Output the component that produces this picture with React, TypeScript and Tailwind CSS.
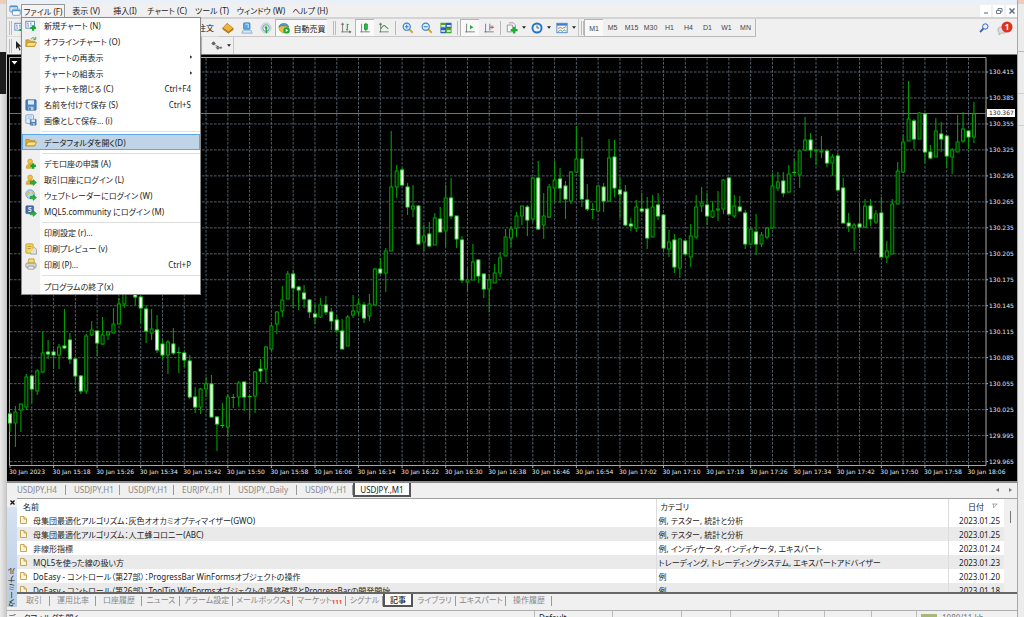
import { useState, type ReactNode } from "react";

// [high, body top, body bottom, low, bearish] in chart units, one entry per minute
const candles: [number, number, number, number, number][] = [
  [412, 414, 423, 432, 1], [406, 412, 423, 447, 0], [404, 404, 410, 432, 0], [374, 377, 407, 410, 0],
  [375, 376, 389, 403, 1], [369, 371, 391, 395, 0], [332, 353, 372, 373, 0], [340, 352, 354, 359, 1],
  [349, 352, 355, 369, 1], [344, 347, 355, 369, 0], [309, 346, 348, 349, 1], [333, 340, 359, 364, 1],
  [359, 359, 376, 385, 1], [375, 376, 391, 394, 1], [334, 336, 391, 394, 0], [321, 330, 335, 336, 0],
  [331, 331, 343, 356, 1], [317, 335, 344, 345, 0], [331, 332, 335, 340, 0], [308, 324, 333, 333, 0],
  [298, 304, 324, 324, 0], [280, 285, 304, 308, 0], [275, 282, 292, 293, 0], [280, 285, 297, 305, 1],
  [293, 297, 308, 323, 1], [305, 309, 331, 343, 1], [309, 329, 333, 340, 0], [315, 330, 350, 353, 1],
  [340, 344, 355, 360, 1], [340, 342, 355, 374, 0], [328, 344, 353, 355, 1], [347, 352, 352, 373, 0],
  [352, 353, 360, 367, 1], [355, 361, 397, 399, 1], [387, 397, 407, 413, 1], [388, 389, 407, 414, 0],
  [377, 384, 389, 397, 0], [375, 384, 417, 417, 1], [416, 417, 424, 451, 1], [403, 425, 425, 428, 0],
  [394, 397, 427, 437, 0], [394, 397, 397, 408, 0], [381, 383, 397, 407, 0], [382, 382, 397, 411, 1],
  [396, 396, 396, 418, 0], [371, 372, 396, 413, 0], [359, 369, 371, 382, 1], [346, 347, 369, 383, 0],
  [323, 326, 349, 351, 0], [311, 312, 324, 334, 0], [286, 300, 311, 317, 0], [271, 274, 299, 299, 0],
  [270, 274, 288, 308, 1], [286, 287, 290, 310, 1], [285, 293, 299, 308, 1], [299, 300, 312, 318, 1],
  [304, 314, 317, 324, 1], [298, 305, 317, 318, 0], [296, 305, 312, 315, 1], [308, 312, 321, 330, 1],
  [315, 320, 330, 333, 1], [319, 331, 349, 349, 1], [315, 317, 346, 346, 0], [295, 311, 315, 318, 0],
  [298, 304, 312, 315, 0], [302, 305, 318, 323, 1], [294, 304, 316, 321, 0], [268, 269, 305, 305, 0],
  [258, 269, 273, 274, 1], [248, 251, 273, 292, 0], [131, 187, 251, 251, 0], [165, 171, 187, 198, 0],
  [168, 170, 185, 186, 1], [183, 187, 207, 215, 1], [185, 206, 209, 217, 0], [205, 206, 244, 245, 1],
  [225, 236, 242, 251, 0], [222, 234, 246, 247, 1], [213, 218, 245, 245, 0], [207, 219, 232, 232, 1],
  [185, 198, 231, 247, 0], [178, 198, 216, 219, 1], [216, 216, 239, 248, 1], [236, 240, 280, 283, 1],
  [267, 280, 282, 292, 0], [244, 262, 280, 280, 0], [259, 260, 276, 283, 1], [274, 274, 289, 298, 1],
  [274, 280, 289, 312, 0], [264, 273, 283, 283, 0], [252, 258, 273, 277, 0], [229, 237, 256, 256, 0],
  [226, 229, 238, 247, 0], [212, 216, 228, 237, 0], [206, 206, 216, 225, 0], [205, 207, 220, 236, 1],
  [177, 178, 219, 222, 0], [161, 178, 229, 230, 1], [193, 216, 225, 239, 0], [184, 187, 217, 218, 0],
  [161, 180, 188, 202, 0], [168, 179, 188, 203, 1], [181, 186, 199, 219, 1], [171, 172, 201, 204, 0],
  [126, 159, 172, 173, 0], [137, 159, 199, 207, 1], [184, 200, 209, 211, 1], [203, 209, 209, 219, 0],
  [185, 186, 211, 211, 0], [183, 187, 201, 212, 1], [139, 158, 201, 202, 0], [140, 157, 188, 197, 1],
  [177, 190, 194, 218, 1], [185, 192, 225, 226, 1], [218, 224, 226, 231, 1], [200, 207, 228, 232, 0],
  [193, 209, 211, 213, 1], [197, 209, 238, 249, 1], [195, 207, 237, 237, 0], [193, 205, 216, 220, 1],
  [214, 215, 248, 251, 1], [230, 242, 249, 257, 0], [234, 240, 267, 273, 1], [238, 239, 268, 278, 0],
  [240, 241, 254, 255, 1], [224, 236, 257, 267, 0], [195, 207, 237, 239, 0], [187, 203, 206, 212, 0],
  [193, 205, 216, 225, 1], [201, 211, 217, 218, 0], [191, 209, 210, 221, 0], [179, 180, 209, 214, 0],
  [177, 178, 214, 214, 1], [195, 206, 216, 218, 0], [196, 207, 211, 212, 1], [210, 213, 244, 249, 1],
  [229, 229, 244, 245, 0], [214, 232, 244, 255, 1], [232, 235, 244, 247, 0], [227, 228, 237, 239, 0],
  [173, 186, 228, 229, 0], [172, 182, 188, 191, 0], [172, 181, 193, 197, 1], [165, 174, 192, 193, 0],
  [159, 172, 172, 176, 0], [151, 151, 175, 188, 0], [117, 140, 150, 151, 0], [133, 140, 150, 158, 1],
  [149, 150, 151, 165, 0], [136, 151, 152, 158, 0], [149, 151, 163, 167, 1], [154, 157, 163, 176, 0],
  [153, 156, 190, 190, 1], [178, 188, 223, 223, 1], [213, 223, 226, 232, 1], [223, 225, 228, 251, 0],
  [204, 224, 227, 233, 1], [199, 206, 227, 228, 0], [199, 206, 219, 226, 1], [210, 214, 222, 224, 0],
  [197, 213, 257, 257, 1], [241, 251, 257, 263, 0], [199, 204, 254, 254, 0], [162, 171, 204, 204, 0],
  [135, 142, 172, 173, 0], [81, 119, 141, 141, 0], [119, 121, 139, 149, 1], [112, 113, 139, 139, 0],
  [114, 114, 152, 163, 1], [145, 152, 158, 159, 1], [118, 131, 157, 157, 0], [122, 134, 139, 152, 1],
  [136, 136, 156, 168, 1], [148, 150, 157, 174, 0], [115, 142, 152, 152, 0], [112, 129, 141, 143, 0],
  [130, 131, 137, 149, 1], [102, 114, 137, 143, 0],
];

const STEP = 5.446;
const xAt = (i: number) => 10 + i * STEP;
const yAt = (row: number) => 72 + row * 25.97;

function timeLabel(n: number) {
  if (n === 0) return "30 Jan 2023";
  const minutes = 15 * 60 + 10 + n * 8;
  return `30 Jan ${Math.floor(minutes / 60)}:${String(minutes % 60).padStart(2, "0")}`;
}

function Chart() {
  return (
    <svg viewBox="7 55 1010 425" preserveAspectRatio="xMinYMin meet" className="h-full w-full" role="img" aria-label="USDJPY M1">
      <g stroke="#5c6a76" strokeWidth="0.9" strokeDasharray="2.6 1.4">
        {Array.from({ length: 16 }, (_, r) => (
          <line key={r} x1="10" x2="986" y1={yAt(r)} y2={yAt(r)} />
        ))}
        {Array.from({ length: 44 }, (_, c) => (
          <line key={c} x1={xAt(c * 4 + 4)} x2={xAt(c * 4 + 4)} y1="58" y2="465" />
        ))}
      </g>
      <line x1="10" x2="986" y1="113.5" y2="113.5" stroke="#66757f" />
      <path d="M9.5 465.5V57.5H986M986 57.5V465.5H9.5" fill="none" stroke="#a8a8a8" />
      {candles.map(([high, top, bottom, low, bear], i) => {
        const x = xAt(i);
        return (
          <g key={i} stroke="#00a000">
            <line x1={x} x2={x} y1={high} y2={low} strokeWidth="1.1" />
            {bottom - top < 1 ? (
              <line x1={x - 2} x2={x + 2} y1={top + 0.5} y2={top + 0.5} stroke="#00d000" />
            ) : (
              <rect
                x={x - 1.5}
                y={top}
                width="3"
                height={bottom - top}
                fill={bear ? "#ffffff" : "#001c00"}
                stroke={bear ? "#3be03b" : "#00a000"}
              />
            )}
          </g>
        );
      })}
      <path d="M11.500 61h6l-3 3.500z" fill="#fff" />
      <g fill="#e8e8e8" fontSize="6" fontFamily="'DejaVu Sans', sans-serif">
        {Array.from({ length: 16 }, (_, r) => (
          <g key={r}>
            <line x1="986" x2="988" y1={yAt(r)} y2={yAt(r)} stroke="#a8a8a8" />
            <text x="989" y={yAt(r) + 2}>{(130.415 - r * 0.03).toFixed(3)}</text>
          </g>
        ))}
        {Array.from({ length: 23 }, (_, n) => (
          <g key={n}>
            <line x1={xAt(n * 8)} x2={xAt(n * 8)} y1="465" y2="468" stroke="#a8a8a8" />
            <text x={xAt(n * 8) - 1} y="474">{timeLabel(n)}</text>
          </g>
        ))}
        <rect x="987" y="109" width="28" height="8" fill="#fff" />
        <text x="989" y="115" fill="#222">130.367</text>
      </g>
    </svg>
  );
}

function Icon({ children, className = "size-3.5" }: { children: ReactNode; className?: string }) {
  return (
    <svg viewBox="0 0 14 14" className={`${className} shrink-0`} fill="none" aria-hidden="true">
      {children}
    </svg>
  );
}

const greenPlus = <path d="M9.500 6v6.500M6.300 9.300h6.500" stroke="#12a82a" strokeWidth="2.600" />;
const greenArrow = <path d="M6 8.500h3.500V6.500L13.500 10l-4 3.500v-2H6z" fill="#22b338" stroke="#0d7d20" strokeWidth=".5" />;
const person = (
  <>
    <path d="M1.500 12c0-4 2-5 4.500-5s4.500 1 4.500 5z" fill="#eab42a" stroke="#b9811a" strokeWidth=".6" />
    <circle cx="6" cy="4" r="2.800" fill="#f3c13d" stroke="#b9811a" strokeWidth=".6" />
  </>
);
const floppy = (
  <>
    <rect x="1" y="1" width="12" height="12" rx="1" fill="#4c82bd" stroke="#2f5f97" strokeWidth=".8" />
    <rect x="3.500" y="1.500" width="7" height="5" fill="#dcebfa" />
    <rect x="4" y="9" width="6" height="4" fill="#b8cde0" />
    <rect x="5" y="10" width="1.500" height="3" fill="#2f5f97" />
  </>
);

const icons: Record<string, ReactNode> = {
  newChart: (
    <>
      <rect x="1" y="1.500" width="10" height="8" fill="#f5faff" stroke="#4b83bd" />
      <path d="M3.500 3v5M2.500 4h1M3.500 7h1M7 3v4M6 4h1" stroke="#4b83bd" strokeWidth=".8" />
      {greenPlus}
    </>
  ),
  folder: (
    <>
      <path d="M1 11.500V4h4l1 1.500h5.500v6z" fill="#e3ad2c" stroke="#a87814" strokeWidth=".7" />
      <path d="M1 11.500 3.500 7h10L11 11.500z" fill="#ffe27a" stroke="#a87814" strokeWidth=".7" />
    </>
  ),
  folderArrow: (
    <>
      <path d="M1 12V4.500h4L6 6h5.500v6z" fill="#e3ad2c" stroke="#a87814" strokeWidth=".7" />
      <path d="M1 12 3.500 7.500h10L11 12z" fill="#ffe27a" stroke="#a87814" strokeWidth=".7" />
      <path d="M7 4c1-2.500 3.500-2.500 4.500-1M12.500 1v3H9.800" stroke="#2a9c36" />
    </>
  ),
  save: floppy,
  saveImage: (
    <>
      <rect x="1" y="1" width="9" height="10" rx="1" fill="#e6f1fb" stroke="#6c9bcb" />
      <path d="M3 3.500h5M3 5.500h3" stroke="#8fb3d8" />
      <g transform="translate(5.500 5.500) scale(.58)">{floppy}</g>
    </>
  ),
  demo: <>{person}{greenPlus}</>,
  login: <>{person}{greenArrow}</>,
  web: (
    <>
      <circle cx="6" cy="6" r="5" fill="#b6dcf5" stroke="#4b83bd" strokeWidth=".8" />
      <path d="M3 3c2-1 3 0 3 1.500S4 6 3.500 8 2 7 1.500 6M7 2c1.500 0 3 1 3.500 3L8 6z" fill="#d9c44c" />
      {greenArrow}
    </>
  ),
  mql: (
    <>
      <rect x="1" y="1" width="9" height="9" rx="1" fill="#506fa8" stroke="#324e85" strokeWidth=".7" />
      <path d="M7.500 3H4.500v2h2.500v2.500H4" stroke="#fff" />
      {greenArrow}
    </>
  ),
  preview: (
    <>
      <rect x="1" y="1" width="8.500" height="11" rx="1" fill="#f4d75a" stroke="#a88d2a" strokeWidth=".8" />
      <path d="M3 4h4.500M3 6.500h3.500" stroke="#a88d2a" />
      <path d="M10 5.500h1.500l2 2V13H6.500v-2" fill="#e2e2dc" stroke="#8d8d85" strokeWidth=".8" />
    </>
  ),
  print: (
    <>
      <path d="M3.500 6 4.500 1h6l.5 5z" fill="#f6dc66" stroke="#a88d2a" strokeWidth=".8" />
      <rect x="1" y="6" width="12" height="5.500" rx="1.500" fill="#d5d5d0" stroke="#85857e" strokeWidth=".8" />
      <path d="M3.500 9.500h7V13h-7z" fill="#efefea" stroke="#85857e" strokeWidth=".8" />
    </>
  ),
  book: (
    <>
      <path d="m1 7 5-5.500 7 6-5.500 5z" fill="#eeb43c" stroke="#a56f12" strokeWidth=".8" />
      <path d="m1 7 6.500 4.500L13 7.500v1.500l-5.500 4L1 8.500z" fill="#c98a1c" stroke="#a56f12" strokeWidth=".7" />
    </>
  ),
  terminal: (
    <>
      <rect x="3" y="1" width="7.500" height="7.500" rx="1" fill="#58a8e8" stroke="#2c70b5" strokeWidth=".8" />
      <path d="M5 2.500h3.500V7" stroke="#d5ecff" />
      <path d="m2.500 9.500-1.500 3.500h12l-1.500-3.500z" fill="#dce8f5" stroke="#7396bf" strokeWidth=".8" />
    </>
  ),
  signal: (
    <>
      <circle cx="7" cy="7" r="5.800" stroke="#b5c0c8" />
      <circle cx="7" cy="7" r="3.700" stroke="#6fa4c4" strokeWidth="1.200" />
      <circle cx="7" cy="6.500" r="1.500" fill="#22a838" />
      <path d="M7.500 7v6" stroke="#22a838" strokeWidth="1.800" />
    </>
  ),
  auto: (
    <>
      <path d="M1 5.500 4 2.500h5l3.500 3-1.500 5-5 2.500-4-3z" fill="#f0bf35" stroke="#a8821c" strokeWidth=".6" />
      <path d="M1 5.500C2 1 11 0 12.500 5.500 9 4 5 4 1 5.500z" fill="#4f9bd6" stroke="#2a6ea8" strokeWidth=".6" />
      <circle cx="10" cy="9.800" r="3.700" fill="#19a832" />
      <path d="m9 7.800 3 2-3 2z" fill="#fff" />
    </>
  ),
  bars: (
    <>
      <path d="M3 2v10M1.500 11.500h11M3 1 1.800 3h2.400zM13 11.500l-2-1.200v2.400z" stroke="#666" strokeWidth=".9" />
      <path d="M8.500 2v8M7 9h1.500M8.500 3H10" stroke="#23963a" strokeWidth="1.200" />
    </>
  ),
  candle: (
    <>
      <path d="M3 2v10M1.500 11.500h11" stroke="#666" strokeWidth=".9" />
      <path d="M8 1v10" stroke="#168a2e" />
      <rect x="6.300" y="2.500" width="3.400" height="6" fill="#22c043" stroke="#168a2e" strokeWidth=".8" />
    </>
  ),
  line: (
    <>
      <path d="M3 2v10M1.500 11.500h11M3 1 1.800 3h2.400z" stroke="#666" strokeWidth=".9" />
      <path d="M3.500 8C5 4 7.500 3 9 5.500l3 2.500" stroke="#3a9c4c" strokeWidth="1.200" />
    </>
  ),
  zoomIn: (
    <>
      <path d="m8.500 8.500 4 4" stroke="#d7a62a" strokeWidth="2.200" />
      <circle cx="5.500" cy="5.500" r="4.200" fill="#d9ecfb" stroke="#3b7fc4" strokeWidth="1.300" />
      <path d="M3.300 5.500h4.400M5.500 3.300v4.400" stroke="#3b7fc4" strokeWidth="1.200" />
    </>
  ),
  zoomOut: (
    <>
      <path d="m8.500 8.500 4 4" stroke="#d7a62a" strokeWidth="2.200" />
      <circle cx="5.500" cy="5.500" r="4.200" fill="#d9ecfb" stroke="#3b7fc4" strokeWidth="1.300" />
      <path d="M3.300 5.500h4.400" stroke="#3b7fc4" strokeWidth="1.200" />
    </>
  ),
  tile: (
    <>
      <path d="M.5 1H7v6H.5zM7 7h6.500v6H7z" fill="#47a52c" />
      <path d="M7 1h6.500v6H7zM.5 7H7v6H.5z" fill="#2a5fc0" />
      <path d="M1.500 3.500H6v2H1.500zM8 3.500h4.500v2H8zM1.500 9.500H6v2H1.500zM8 9.500h4.500v2H8z" fill="#f2f8ff" />
    </>
  ),
  scroll: (
    <>
      <path d="M3 2v10M1.500 11.500h11" stroke="#666" strokeWidth=".9" />
      <path d="m7 3.500 4 2.500-4 2.500z" fill="#25ab3c" />
    </>
  ),
  shift: (
    <>
      <path d="M3 2v10M1.500 11.500h11" stroke="#666" strokeWidth=".9" />
      <path d="M8 2v8" stroke="#3b6fb5" />
      <path d="M8 6h5M10.500 4v4" stroke="#d0552c" strokeWidth="1.200" />
    </>
  ),
  indicator: (
    <>
      <path d="M1.500 3.500h6v8h-6zM3.500 1h5L11 3.500V9H7.500" fill="#f6f6f6" stroke="#777" strokeWidth=".8" />
      <path d="M9.500 5.500v8M5.500 9.500h8" stroke="#13b32c" strokeWidth="2.800" />
    </>
  ),
  clock: (
    <>
      <circle cx="7" cy="7" r="5.300" fill="#e9f5ff" stroke="#2272c6" strokeWidth="2.200" />
      <path d="M7 4v3h2.500" stroke="#444" />
    </>
  ),
  template: (
    <>
      <rect x="1" y="1.500" width="12" height="11" fill="#f5faff" stroke="#3e7fca" />
      <path d="M1 3h12" stroke="#3e7fca" strokeWidth="2.500" />
      <path d="m2.500 7.500 3-1 2 1 4-2" stroke="#bf5a3a" />
      <path d="m2.500 11 3-1.500 2 1.500 2-2 2 1.500" stroke="#36a04c" />
    </>
  ),
  arrows: (
    <>
      <path d="m1 4 2-2 2 2-2 2zM5 6l3 1.500" stroke="#444" fill="#666" strokeWidth=".8" />
      <path d="m6 9 2-2 2 2-2 2zM10 9h3M11.500 7.500v3" stroke="#444" fill="#888" strokeWidth=".8" />
    </>
  ),
  windows: (
    <>
      <rect x="1" y="1" width="9" height="7" rx="1" fill="#d7e8f8" stroke="#5791cc" />
      <rect x="4" y="5" width="9" height="7" rx="1" fill="#fff" stroke="#5791cc" />
      <path d="M1 2h9M4 6.500h9" stroke="#5791cc" strokeWidth="1.500" />
    </>
  ),
};

type MenuEntry = { label: string; icon?: string; key?: string; sub?: boolean } | "separator";

const fileMenu: MenuEntry[] = [
  { label: "新規チャート (N)", icon: "newChart" },
  { label: "オフラインチャート (O)", icon: "folderArrow" },
  { label: "チャートの再表示", sub: true },
  { label: "チャートの組表示", sub: true },
  { label: "チャートを閉じる (C)", key: "Ctrl+F4" },
  { label: "名前を付けて保存 (S)", icon: "save", key: "Ctrl+S" },
  { label: "画像として保存... (i)", icon: "saveImage" },
  "separator",
  { label: "データフォルダを開く(D)", icon: "folder" },
  "separator",
  { label: "デモ口座の申請 (A)", icon: "demo" },
  { label: "取引口座にログイン (L)", icon: "login" },
  { label: "ウェブトレーダーにログイン (W)", icon: "web" },
  { label: "MQL5.community にログイン (M)", icon: "mql" },
  "separator",
  { label: "印刷設定 (r)..." },
  { label: "印刷プレビュー (v)", icon: "preview" },
  { label: "印刷 (P)...", icon: "print", key: "Ctrl+P" },
  "separator",
  { label: "プログラムの終了(x)" },
];

function FileMenu() {
  return (
    <div className="absolute top-full left-0 z-10 flex h-[278px] w-[180px] flex-col border border-[#8a8a8a] bg-[linear-gradient(to_right,#f0f0f0_18px,#ffffff_18px)] shadow">
      {fileMenu.map((entry, i) => {
        if (entry === "separator") {
          return (
            <div key={i} className="flex h-1.5 items-center pl-5">
              <div className="h-px w-full bg-[#dedede]" />
            </div>
          );
        }
        const active = entry.label.startsWith("データ");
        return (
          <button
            key={i}
            className={`flex min-h-0 flex-1 items-center border px-0.5 text-left ${active ? "border-[#5fa8e6] bg-[#bfd4e6]" : "border-transparent"}`}
          >
            <span className="flex w-[19px] shrink-0 items-center">{entry.icon && <Icon className="size-3">{icons[entry.icon]}</Icon>}</span>
            <span className="flex-1">{entry.label}</span>
            {entry.key && <span className="pr-1.5">{entry.key}</span>}
            {entry.sub && (
              <svg viewBox="0 0 4 6" className="mr-1 h-1 w-[3px]" aria-hidden="true">
                <path d="M0 .5 3 3 0 5.500z" fill="#111" />
              </svg>
            )}
          </button>
        );
      })}
    </div>
  );
}

const menus = [
  { label: "表示 (V)", width: "w-[42px]" },
  { label: "挿入(I)", width: "w-9" },
  { label: "チャート (C)", width: "w-12" },
  { label: "ツール (T)", width: "w-[42px]" },
  { label: "ウィンドウ (W)", width: "w-14" },
  { label: "ヘルプ (H)", width: "w-[42px]" },
];

function MenuBar() {
  return (
    <nav className="flex h-[13px] shrink-0 items-stretch pl-[2px]">
      <span className="flex w-3 items-center"><Icon className="size-3">{icons.windows}</Icon></span>
      <div className="relative flex w-[44px]">
        <button className="flex-1 border border-b-0 border-[#9a9a9a] bg-[#f4f4f4] whitespace-nowrap">ファイル (F)</button>
        <FileMenu />
      </div>
      {menus.map((m) => (
        <button key={m.label} className={m.width}>{m.label}</button>
      ))}
      <div className="ml-auto flex gap-0.5 pt-px">
        <button className="flex w-[11px] items-center justify-center bg-white" aria-label="最小化">
          <svg viewBox="0 0 8 8" className="size-2"><path d="M2 6h4" stroke="#6d7e90" strokeWidth="1.200" /></svg>
        </button>
        <button className="flex w-[11px] items-center justify-center bg-white" aria-label="元に戻す">
          <svg viewBox="0 0 8 8" className="size-2" fill="none" stroke="#6d7e90"><path d="M3 3V1.500h4V5H5.500M1.500 3.500h4v3h-4z" /></svg>
        </button>
        <button className="flex w-[11px] items-center justify-center bg-white" aria-label="閉じる">
          <svg viewBox="0 0 8 8" className="size-2"><path d="m1.500 1.500 5 5m0-5-5 5" stroke="#5d6e80" strokeWidth="1.500" /></svg>
        </button>
      </div>
    </nav>
  );
}

function Tool({ icon, pressed, drop }: { icon: string; pressed?: boolean; drop?: boolean }) {
  return (
    <button
      aria-label={icon}
      className={`flex h-full items-center justify-center ${drop ? "w-[25px] gap-1" : "w-[19px]"} ${pressed ? "border-t border-l border-[#b5b5b5] bg-[#f9f9f9]" : ""}`}
    >
      <Icon className="size-3">{icons[icon]}</Icon>
      {drop && <DropArrow />}
    </button>
  );
}

function DropArrow() {
  return (
    <svg viewBox="0 0 5 3" className="h-[3px] w-1" aria-hidden="true">
      <path d="M0 0h5L2.500 3z" fill="#222" />
    </svg>
  );
}

function Divider() {
  return <span className="mx-0.5 h-3.5 w-px shrink-0 bg-[#b8b8b8]" />;
}

function Grip() {
  return <span className="h-3.5 w-[3px] shrink-0 border-x border-[#bcbcbc]" />;
}

const timeframes = ["M1", "M5", "M15", "M30", "H1", "H4", "D1", "W1", "MN"];

function Toolbars() {
  const [timeframe, setTimeframe] = useState("M1");

  return (
    <div className="h-[37px] shrink-0 border-t-2 border-[#d4d4d4]">
      <div className="flex h-[18px] items-center">
        <div className="flex h-full w-[211px] items-center justify-between border-b border-[#d8d8d8] pr-1 pl-0.5">
          <Grip />
          <Icon className="mr-auto ml-0.5 size-3">{icons.newChart}</Icon>
          <button>新規注文</button>
        </div>
        <div className="flex h-full items-center border-r border-b border-[#c8c8c8]">
          <Tool icon="book" />
          <Tool icon="terminal" />
          <Tool icon="signal" />
          <button className="flex h-full w-[52px] items-center justify-center gap-1 border-t border-l border-[#b5b5b5] bg-[#f9f9f9]">
            <Icon className="size-3">{icons.auto}</Icon>自動売買
          </button>
          <span className="w-1.5" />
          <Grip />
          <Tool icon="bars" />
          <Tool icon="candle" pressed />
          <Tool icon="line" />
          <Divider />
          <Tool icon="zoomIn" />
          <Tool icon="zoomOut" />
          <Tool icon="tile" />
          <Divider />
          <Tool icon="scroll" pressed />
          <Tool icon="shift" />
          <Divider />
          <Tool icon="indicator" drop />
          <Tool icon="clock" drop />
          <Tool icon="template" drop />
        </div>
        <div className="flex h-full items-center border-r border-b border-[#b8b8b8] pl-0.5 font-['Liberation_Sans',sans-serif] text-[7px] text-[#444]">
          <Grip />
          {timeframes.map((t) => (
            <button
              key={t}
              onClick={() => setTimeframe(t)}
              className={`h-full w-[19px] ${t === timeframe ? "border-t border-l border-[#b5b5b5] bg-[#f9f9f9]" : ""}`}
            >
              {t}
            </button>
          ))}
        </div>
        <div className="ml-auto flex items-center gap-2 pr-1">
          <button aria-label="検索">
            <svg viewBox="0 0 10 10" className="size-2.5" fill="none">
              <path d="M4.500 5.500 1 9" stroke="#3c63c0" strokeWidth="1.800" />
              <circle cx="6.300" cy="3.500" r="2.700" fill="#e8f0ff" stroke="#3c63c0" />
            </svg>
          </button>
          <button aria-label="通知 1件">
            <svg viewBox="0 0 16 15" className="h-[15px] w-4">
              <path d="M1 8c0-3 8-3 9 0s-3 5-5.500 4L2 14v-2.500C1 11 1 9 1 8z" fill="#dcdcdc" stroke="#a0a0a0" strokeWidth=".7" />
              <circle cx="10" cy="6" r="5.500" fill="#dc3420" />
              <text x="10" y="9" fontSize="8" fontWeight="700" textAnchor="middle" fill="#fff">1</text>
            </svg>
          </button>
        </div>
      </div>
      <div className="flex h-[17px] items-center">
        <div className="flex h-full w-[195px] items-center gap-0.5 border-r border-[#b8b8b8] pl-0.5">
          <Grip />
          <svg viewBox="0 0 8 10" className="h-2.5 w-2"><path d="M2 0v8l2-2 1.500 3.500 1-.5L5 5.500h2.500z" fill="#222" /></svg>
        </div>
        <div className="flex h-full w-8 items-center justify-end border-r border-[#c8c8c8]">
          <Tool icon="arrows" drop />
        </div>
      </div>
    </div>
  );
}

const chartTabs = [
  { label: "USDJPY,H4", width: "w-[57px]" },
  { label: "USDJPY,H1", width: "w-[54px]" },
  { label: "USDJPY,H1", width: "w-[54px]" },
  { label: "EURJPY.,H1", width: "w-[56px]" },
  { label: "USDJPY.,Daily", width: "w-[67px]" },
  { label: "USDJPY.,H1", width: "w-[56px]" },
];

function ChartTabs() {
  return (
    <div className="flex h-[17px] shrink-0 border-t-2 border-[#8c8c8c] pl-0.5 text-[#888]">
      {chartTabs.map((t, i) => (
        <button key={i} className={`${t.width} relative h-[13px] pl-2 text-left after:absolute after:top-0.5 after:right-0 after:h-2.5 after:w-px after:bg-[#999]`}>
          {t.label}
        </button>
      ))}
      <button className="h-[14px] w-[58px] border-2 border-t-0 border-[#555] bg-white text-[#222]">USDJPY.,M1</button>
      <div className="ml-auto flex h-[13px] items-center gap-2 pr-1">
        <button aria-label="前へ"><svg viewBox="0 0 5 6" className="h-1.5 w-[5px]"><path d="M4 1 1 3l3 2z" fill="#777" /></svg></button>
        <button aria-label="次へ"><svg viewBox="0 0 5 6" className="h-1.5 w-[5px]"><path d="m1 1 3 2-3 2z" fill="#777" /></svg></button>
      </div>
    </div>
  );
}

const articles = [
  { name: "母集団最適化アルゴリズム：灰色オオカミオプティマイザー(GWO)", category: "例, テスター, 統計と分析", date: "2023.01.25" },
  { name: "母集団最適化アルゴリズム：人工蜂コロニー(ABC)", category: "例, テスター, 統計と分析", date: "2023.01.25" },
  { name: "非線形指標", category: "例, インディケータ, インディケータ, エキスパート", date: "2023.01.24" },
  { name: "MQL5を使った線の扱い方", category: "トレーディング, トレーディングシステム, エキスパートアドバイザー", date: "2023.01.23" },
  { name: "DoEasy - コントロール（第27部）：ProgressBar WinFormsオブジェクトの操作", category: "例", date: "2023.01.20" },
  { name: "DoEasy - コントロール（第26部）：ToolTip WinFormsオブジェクトの最終確認とProgressBarの開発開始", category: "例", date: "2023.01.18" },
];

const terminalTabs = [
  { label: "取引", width: "w-8" },
  { label: "運用比率", width: "w-[46px]" },
  { label: "口座履歴", width: "w-[46px]" },
  { label: "ニュース", width: "w-[38px]" },
  { label: "アラーム設定", width: "w-[53px]" },
  { label: "メールボックス", width: "w-[60px]", count: 3 },
  { label: "マーケット", width: "w-[53px]", count: 111 },
  { label: "シグナル", width: "w-[37px]" },
  { label: "記事", width: "w-[30px]" },
  { label: "ライブラリ", width: "w-[43px]" },
  { label: "エキスパート", width: "w-[50px]" },
  { label: "操作履歴", width: "w-[46px]" },
];

function Terminal() {
  return (
    <section className="flex h-[112px] shrink-0">
      <div className="flex w-[10px] shrink-0 flex-col items-center">
        <button className="flex h-[9px] w-full items-center justify-center" aria-label="閉じる">
          <svg viewBox="0 0 5 5" className="size-[5px]"><path d="m.5.5 4 4m0-4-4 4" stroke="#111" strokeWidth="1.300" /></svg>
        </button>
        <div className="flex w-full flex-1 rotate-180 items-center bg-gradient-to-t from-[#d5e3f2] to-[#b7cbdf] [writing-mode:vertical-rl]">
          <span className="leading-[10px]">ターミナル</span>
        </div>
        <div className="h-[3px]" />
      </div>
      <div className="flex min-w-0 flex-1 flex-col">
        <div className="flex h-[96px] overflow-hidden border-t border-b-2 border-t-[#a0a0a0] border-b-[#666] bg-white">
          <table className="h-fit min-w-0 flex-1 table-fixed border-collapse">
            <thead>
              <tr className="h-[14px] text-left">
                <th className="pl-1.5 font-normal">名前</th>
                <th className="w-[292px] border-l border-[#dcdcdc] pl-1 font-normal">カテゴリ</th>
                <th className="w-[56px] border-l border-[#dcdcdc] font-normal">
                  <span className="flex items-center justify-end gap-2 pr-1.5">
                    日付
                    <svg viewBox="0 0 6 6" className="size-1.5" fill="none"><path d="M0 1h5.500M1.500 1v4L5 1" stroke="#999" strokeWidth=".8" /></svg>
                  </span>
                </th>
              </tr>
            </thead>
            <tbody>
              {articles.map((a) => (
                <tr key={a.name} className="h-3.5 even:bg-[#eaeaea]">
                  <td className="whitespace-nowrap">
                    <span className="flex items-center gap-1.5 pl-[3px]">
                      <svg viewBox="0 0 7 8" className="h-2 w-[7px] shrink-0"><path d="M.5.5H4l2.500 2.500v4.500h-6zM4 .5V3h2.500" fill="#fdf3cf" stroke="#b8923a" strokeWidth=".8" /></svg>
                      {a.name}
                    </span>
                  </td>
                  <td className="border-l border-[#dcdcdc] pl-0.5 whitespace-nowrap">{a.category}</td>
                  <td className="border-l border-[#dcdcdc] pr-1 text-right">{a.date}</td>
                </tr>
              ))}
            </tbody>
          </table>
          <div className="flex w-[13px] justify-center bg-[#f0f0f0] pt-3">
            <div className="h-3 w-px bg-[#777]" />
          </div>
        </div>
        <div className="flex h-[13px] pl-px text-[#888]">
          {terminalTabs.map((t) =>
            t.label === "記事" ? (
              <button key={t.label} className={`${t.width} border-2 border-t-0 border-[#555] bg-white font-medium text-[#222]`}>
                {t.label}
              </button>
            ) : (
              <button
                key={t.label}
                className={`${t.width} relative flex justify-center whitespace-nowrap after:absolute after:top-0.5 after:right-0 after:h-2.5 after:w-px after:bg-[#999]`}
              >
                {t.label}
                {t.count && <span className="pt-1 text-[6px] leading-[8px] font-bold text-[#f04040]">{t.count}</span>}
              </button>
            ),
          )}
        </div>
      </div>
    </section>
  );
}

function StatusBar() {
  return (
    <footer className="flex h-[7px] shrink-0 overflow-hidden border-t border-[#b0b0b0] leading-[14px] *:border-[#bbb]">
      <span className="flex-1 border-r pl-px">データフォルダを開く</span>
      <span className="w-[78px] border-r pl-1">Default</span>
      <span className="w-[69px] border-r" />
      <span className="w-[49px] border-r" />
      <span className="w-12 border-r" />
      <span className="w-[46px] border-r" />
      <span className="w-[47px] border-r" />
      <span className="w-[45px] border-r" />
      <span className="flex w-[100px] gap-1 pl-1 text-[#777]">
        <svg viewBox="0 0 17 8" className="mt-[3px] h-2 w-[17px]">
          <path d="M1 0v8M3 0v8M5 0v8M7 0v8M9 0v8M11 0v8M13 0v8M15 0v8" stroke="#7d9a3a" strokeWidth="1.300" />
        </svg>
        1080/11 kb
      </span>
    </footer>
  );
}

export default function App() {
  return (
    <div className="flex h-screen min-h-[600px] overflow-hidden bg-[#f0f0f0] font-['Noto_Sans','Noto_Sans_CJK_JP',sans-serif] text-[8px] leading-[11px] text-[#222] [font-feature-settings:'palt']">
      <div className="flex w-1.5 shrink-0 flex-col">
        <div className="h-1 bg-[#ecccbc]" />
        <div className="h-12 bg-[#e6e6e6]" />
        <div className="h-[42px] bg-[#1c1c1c]" />
        <div className="flex-1 bg-gradient-to-r from-[#ebebeb] to-[#cbcbcb]" />
      </div>
      <main className="flex min-w-0 flex-1 flex-col border-l border-[#c4c4c4]">
        <div className="h-1 shrink-0 bg-[#eaf0fa]" />
        <MenuBar />
        <Toolbars />
        <div className="min-h-0 flex-1 border-t border-[#777] bg-black">
          <Chart />
        </div>
        <ChartTabs />
        <Terminal />
        <StatusBar />
      </main>
      <div className="flex w-[7px] shrink-0 flex-col border-l border-[#a8a8a8] bg-[#ececec]">
        <div className="h-1 bg-[#ecccbc]" />
        <div className="h-12 border-b border-[#b8b8b8]" />
        <div className="h-[42px] border-b border-[#d0d0d0]" />
        <div className="h-8 border-b border-[#d0d0d0]" />
      </div>
    </div>
  );
}
